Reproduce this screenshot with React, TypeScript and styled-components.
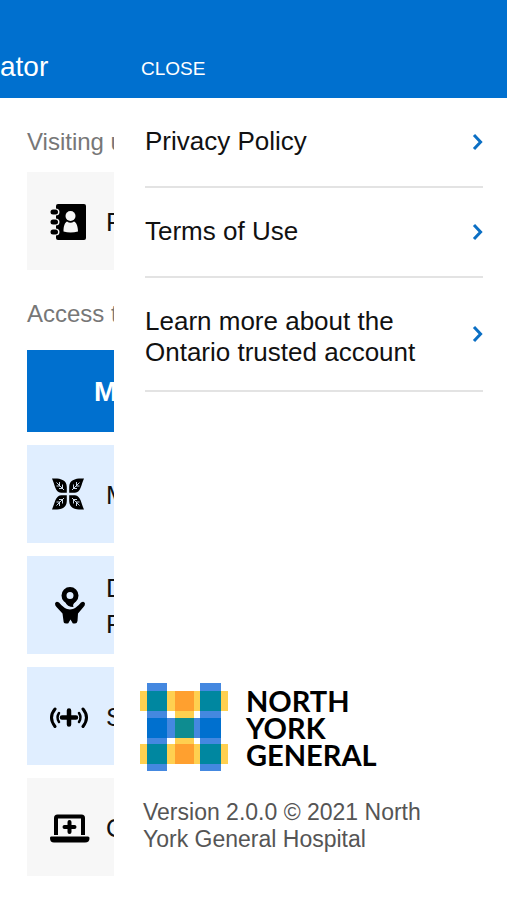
import React from "react";
import styled, { createGlobalStyle } from "styled-components";

const GlobalStyle = createGlobalStyle`
  * { box-sizing: border-box; }
  body {
    margin: 0;
    background: #fff;
    color: #111;
    font-family: "Liberation Sans", Arial, Helvetica, sans-serif;
  }
  h1, h2, p, ul { margin: 0; padding: 0; }
`;

const Screen = styled.div`
  min-height: 100vh;
  display: grid;
  grid-template-columns: 114px minmax(0, 1fr);
  grid-template-rows: auto 1fr;
`;

const Header = styled.header`
  grid-column: 1 / -1;
  display: grid;
  grid-template-columns: subgrid;
  align-items: center;
  padding: 36px 0 0;
  height: 98px;
  background: #0070cf;
  color: #fff;
`;

const Title = styled.h1`
  overflow: hidden;
  font-size: 28px;
  line-height: 32px;
  font-weight: 400;
`;

const CloseButton = styled.button`
  justify-self: start;
  margin-left: 27px;
  padding: 4px 0 0;
  border: 0;
  background: none;
  color: #fff;
  font: 400 19px/24px "Liberation Sans", Arial, sans-serif;
  cursor: pointer;
`;

const Page = styled.main`
  padding-left: 27px;
  overflow: hidden;
  white-space: nowrap;
`;

const Section = styled.section`
  display: flex;
  flex-direction: column;
  gap: 13px;
  margin-top: 28px;
`;

const SectionTitle = styled.h2`
  color: #777;
  font-size: 24px;
  line-height: 32px;
  font-weight: 400;
`;

const Cards = styled.div<{ $top: number }>`
  display: flex;
  flex-direction: column;
  gap: 13px;
  margin-top: ${(p) => p.$top}px;
`;

const Card = styled.button<{ $tone: "blue" | "grey" }>`
  display: flex;
  align-items: center;
  gap: 15px;
  height: 98px;
  padding: 2px 0 0 21px;
  border: 0;
  overflow: hidden;
  background: ${(p) => (p.$tone === "blue" ? "#e0eeff" : "#f7f7f7")};
  color: #111;
  font: 400 26px/36px "Liberation Sans", Arial, sans-serif;
  text-align: left;
  svg { flex: none; }
`;

const PrimaryButton = styled.button`
  height: 82px;
  padding: 2px 0 0 67px;
  border: 0;
  overflow: hidden;
  background: #0070cf;
  color: #fff;
  text-align: left;
  font: 700 28px/32px "Liberation Sans", Arial, sans-serif;
`;

const CardLabel = styled.span`
  display: flex;
  flex-direction: column;
`;

const Drawer = styled.aside`
  display: flex;
  flex-direction: column;
  padding: 0 24px 47px 31px;
  background: #fff;
`;

const LinkList = styled.ul`
  list-style: none;
`;

const LinkLabel = styled.span`
  padding: 28px 0 29px;
`;

const LinkItem = styled.li`
  border-bottom: 2px solid #e3e3e3;
  &:last-child ${LinkLabel} { padding-bottom: 22px; }
`;

const MenuLink = styled.a`
  display: flex;
  align-items: center;
  justify-content: space-between;
  gap: 24px;
  color: #111;
  font-size: 26px;
  line-height: 31px;
  text-decoration: none;
  svg { flex: none; }
`;

const Footer = styled.footer`
  display: flex;
  flex-direction: column;
  gap: 28px;
  margin-top: auto;
  margin-left: -5px;
`;

const Brand = styled.div`
  display: flex;
  align-items: center;
  gap: 18px;
`;

const BrandName = styled.p`
  color: #000;
  font: 700 29px/27px Lato, sans-serif;
`;

const Version = styled.p`
  max-width: 300px;
  padding-left: 3px;
  color: #555;
  font-size: 23px;
  line-height: 27px;
`;

const Chevron = () => (
  <svg width="11" height="18" viewBox="0 0 11 18" fill="none" stroke="#0b6fc4" strokeWidth="3" aria-hidden="true">
    <path d="M2 2 L8.6 9 L2 16" />
  </svg>
);

const ContactsIcon = () => (
  <svg width="43" height="42" viewBox="0 0 43 42" aria-hidden="true">
    <rect x="8" y="3" width="30" height="36" rx="2" />
    {[11, 21, 31].map((y) => (
      <g key={y}>
        <path d={`M5 ${y - 3.5}H7.500Q11.500 ${y - 3.5} 11.500 ${y}Q11.500 ${y + 3.5} 7.500 ${y + 3.5}H5Z`} fill="#f7f7f7" />
        <rect x="2.500" y={y - 2.5} width="7.500" height="5" rx="2.5" />
      </g>
    ))}
    <circle cx="22.5" cy="15" r="5" fill="#f7f7f7" />
    <path d="M15.500 30.500 C15.500 24.500 17 21.500 19 20.500 Q22.500 23 26 20.500 C28.500 21.500 30 25.500 30 30.500 Q22.500 32.500 15.500 30.500Z" fill="#f7f7f7" />
  </svg>
);

const Leaf = ({ transform }: { transform: string }) => (
  <g transform={transform}>
    <path d="M-1.200 -1.200 H-7 C-13 -2 -13 -9 -16 -15.500 C-9 -16 -1.200 -15 -1.200 -7Z" />
    <path d="M-11.500 -11.500 L-4 -4 M-8.500 -12 V-8.500 M-5.500 -9.500 V-5.500 M-8 -8 H-11.500 M-5.500 -5.500 H-9" fill="none" stroke="#e0eeff" strokeWidth="0.9" />
  </g>
);

const LeavesIcon = () => (
  <svg width="43" height="42" viewBox="0 0 43 42" aria-hidden="true">
    <Leaf transform="translate(20 20)" />
    <Leaf transform="translate(20 20) scale(-1 1)" />
    <Leaf transform="translate(20 20) scale(1 -1)" />
    <Leaf transform="translate(20 20) scale(-1 -1)" />
  </svg>
);

const PersonIcon = () => (
  <svg width="43" height="42" viewBox="0 0 43 42" aria-hidden="true">
    <circle cx="22" cy="10.500" r="6" fill="none" stroke="#000" strokeWidth="5" />
    <path d="M17 16.500 H28 Q24 19 25.500 22 Q19 22 17 16.500Z" />
    <path d="M7 18.500 Q8 15.500 11 17.500 Q16 24 22 24.500 Q28 24 33 17.500 Q36 15.500 37 18.500 Q37 20.500 35.500 22 L30 28.500 L29.500 36 Q29 38.500 27 38.500 H25.500 Q24.500 38.500 24 37 L22.500 34.500 L21 37 Q20.500 38.500 19.500 38.500 H18 Q15.500 38.500 15.500 36 L14.500 28.500 L8.500 22 Q7 20.500 7 18.500Z" />
  </svg>
);

const SignalIcon = () => (
  <svg width="43" height="42" viewBox="0 0 43 42" fill="none" stroke="#000" strokeLinecap="round" aria-hidden="true">
    <path d="M21 14.500 V28.500 M14 21.500 H28" strokeWidth="4.500" />
    <path d="M11 17 Q8 21.500 11 26 M31 17 Q34 21.500 31 26" strokeWidth="2.500" />
    <path d="M7 13 Q0 21.500 7 30.500 M35 13 Q42 21.500 35 30.500" strokeWidth="3" />
  </svg>
);

const LaptopIcon = () => (
  <svg width="43" height="42" viewBox="0 0 43 42" aria-hidden="true">
    <path d="M8 28 V11 Q8 9.500 9.500 9.500 H33.500 Q35 9.500 35 11 V28" fill="none" stroke="#000" strokeWidth="4" />
    <path d="M21.500 15 V25 M16.500 20 H26.500" fill="none" stroke="#000" strokeWidth="4" strokeLinecap="round" />
    <path d="M3 29.500 H40 Q41.500 29.500 41.500 31 Q41.500 35.500 37 35.500 H6 Q2 35.500 2 31 Q2 29.500 3 29.500Z" />
  </svg>
);

const WeaveLogo = () => (
  <svg width="88" height="88" viewBox="0 0 88 88" role="img" aria-label="North York General logo">
    <path fill="#ffd050" d="M0 8H88V28H0ZM0 61H88V81H0ZM35 8H54V81H35Z" />
    <path fill="#4488e0" d="M7 0H27V88H7ZM60 0H81V88H60ZM7 35H81V55H7Z" />
    <path fill="#0087a0" d="M7 8H27V28H7ZM60 8H81V28H60ZM7 61H27V81H7ZM60 61H81V81H60Z" />
    <path fill="#ffa02f" d="M35 8H54V28H35ZM35 61H54V81H35Z" />
    <path fill="#0070cf" d="M7 35H27V55H7ZM60 35H81V55H60Z" />
    <path fill="#0e8c90" d="M35 35H54V55H35Z" />
  </svg>
);

const links = ["Privacy Policy", "Terms of Use", "Learn more about the Ontario trusted account"];

const accessCards = [
  { lines: ["M"], tone: "blue", icon: <LeavesIcon /> },
  { lines: ["D", "P"], tone: "blue", icon: <PersonIcon /> },
  { lines: ["S"], tone: "blue", icon: <SignalIcon /> },
  { lines: ["O"], tone: "grey", icon: <LaptopIcon /> },
] as const;

export default function App() {
  return (
    <>
      <GlobalStyle />
      <Screen>
        <Header>
          <Title>ator</Title>
          <CloseButton type="button">CLOSE</CloseButton>
        </Header>
        <Page>
          <Section>
            <SectionTitle>Visiting u</SectionTitle>
            <Cards $top={1}>
              <Card type="button" $tone="grey">
                <ContactsIcon />
                <CardLabel>F</CardLabel>
              </Card>
            </Cards>
          </Section>
          <Section>
            <SectionTitle>Access t</SectionTitle>
            <Cards $top={7}>
              <PrimaryButton type="button">M</PrimaryButton>
              {accessCards.map((card) => (
                <Card type="button" key={card.lines[0]} $tone={card.tone}>
                  {card.icon}
                  <CardLabel>
                    {card.lines.map((line) => (
                      <span key={line}>{line}</span>
                    ))}
                  </CardLabel>
                </Card>
              ))}
            </Cards>
          </Section>
        </Page>
        <Drawer>
          <nav aria-label="Information">
            <LinkList>
              {links.map((text) => (
                <LinkItem key={text}>
                  <MenuLink href="#">
                    <LinkLabel>{text}</LinkLabel>
                    <Chevron />
                  </MenuLink>
                </LinkItem>
              ))}
            </LinkList>
          </nav>
          <Footer>
            <Brand>
              <WeaveLogo />
              <BrandName>
                NORTH
                <br />
                YORK
                <br />
                GENERAL
              </BrandName>
            </Brand>
            <Version>Version 2.0.0 © 2021 North York General Hospital</Version>
          </Footer>
        </Drawer>
      </Screen>
    </>
  );
}
